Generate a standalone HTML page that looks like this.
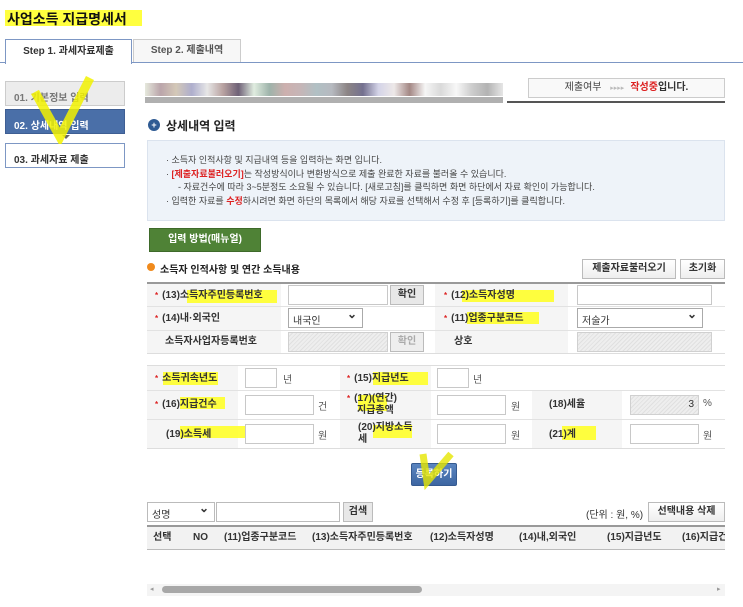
<!DOCTYPE html>
<html><head><meta charset="utf-8"><style>
*{box-sizing:border-box;margin:0;padding:0}
body{width:743px;height:607px;background:#fff;font-family:"Liberation Sans","Noto Sans CJK KR",sans-serif;font-size:10px;color:#333;position:relative;overflow:hidden}
.a{position:absolute}
.hl{position:absolute;background:#ffff2a;opacity:.9}
.inp{position:absolute;border:1px solid #c8c8c8;background:#fff;height:20px}
.dis{background:repeating-linear-gradient(135deg,#eee 0 2px,#e0e0e0 2px 3px);border-color:#d0d0d0}
.btn{position:absolute;border:1px solid #bbb;background:linear-gradient(#fff,#eee);font-weight:bold;font-size:10px;text-align:center;color:#333}
.lbl{position:absolute;font-weight:bold;font-size:10px;color:#333;line-height:12px;white-space:nowrap}
.st{color:#d22;font-size:8px;margin-right:4px}
.sel{position:absolute;border:1px solid #aaa;background:#fff;height:20px;font-size:10px;padding:3px 4px}
.sel:after{content:"⌄";position:absolute;right:5px;top:-2px;font-weight:bold;font-size:12px}
.u{position:absolute;font-size:10px;color:#555}
</style></head><body>
<div class="hl" style="left:5px;top:10px;width:137px;height:16px"></div>
<div class="a" style="left:7px;top:9px;font-size:14px;font-weight:bold;color:#111">사업소득 지급명세서</div>

<div class="a" style="left:0;top:62px;width:743px;height:1px;background:#7d97c4"></div>
<div class="a" style="left:5px;top:39px;width:127px;height:25px;border:1px solid #7d97c4;border-bottom:none;background:#fff;font-weight:bold;font-size:10px;text-align:center;line-height:23px;color:#333">Step 1. 과세자료제출</div>
<div class="a" style="left:133px;top:39px;width:108px;height:23px;border:1px solid #ccc;border-bottom:none;background:#f7f7f7;font-weight:bold;font-size:10px;text-align:center;line-height:22px;color:#555">Step 2. 제출내역</div>

<div class="a" style="left:5px;top:81px;width:120px;height:25px;background:#ececec;border:1px solid #ccc;font-weight:bold;color:#777;padding:7px 8px">01. 기본정보 입력</div>
<div class="a" style="left:5px;top:109px;width:120px;height:25px;background:#4a6fa8;border:1px solid #3e5e93;font-weight:bold;color:#fff;padding:7px 8px">02. 상세내역 입력</div>
<div class="a" style="left:62px;top:135px;width:0;height:0;border-left:4px solid transparent;border-right:4px solid transparent;border-top:4px solid #666"></div>
<div class="a" style="left:5px;top:143px;width:120px;height:25px;background:#fff;border:1px solid #7d97c4;font-weight:bold;color:#333;padding:7px 8px">03. 과세자료 제출</div>
<svg class="a" style="left:30px;top:72px" width="66" height="72"><path d="M5 20 L30 65 L60 6" stroke="#f2f200" stroke-width="9" fill="none" opacity=".85"/></svg>

<div class="a" style="left:145px;top:83px;width:358px;height:13px;background:linear-gradient(90deg,#dfe3d4,#a98e95,#c9bba6,#9a9ac0,#e0e0e0,#a88c8a,#4b3a55,#d8e8d8,#86a095,#c09c9a,#b7a3a5,#9db0b5,#a4a8b0,#6f6666,#514d73,#c9c9e2,#e9e3e3,#8d6a66,#f3f3f3,#d0d0d0,#f6f6f6,#c0c0c0,#a0a0a0,#e0e0e0);opacity:.8"></div>
<div class="a" style="left:145px;top:97px;width:358px;height:6px;background:#b0b0b0"></div>

<div class="a" style="left:507px;top:101px;width:218px;height:2px;background:#555"></div>
<div class="a" style="left:528px;top:78px;width:197px;height:20px;border:1px solid #ccc;background:#f9f9f9;text-align:center;line-height:18px;font-size:10px"><span style="color:#444">제출여부</span> <span style="color:#bbb;font-size:7px;margin:0 6px">▸▸▸▸</span><b style="color:#d22">작성중</b><b>입니다.</b></div>

<div class="a" style="left:148px;top:119px;width:12px;height:12px;border-radius:50%;background:#2f5b93;color:#fff;font-size:9px;line-height:12px;text-align:center;font-weight:bold">+</div>
<div class="a" style="left:166px;top:117px;font-size:12px;font-weight:bold;color:#222">상세내역 입력</div>

<div class="a" style="left:147px;top:140px;width:578px;height:81px;background:#eef3f9;border:1px solid #dbe3ee;font-size:9px;color:#444;line-height:13.5px;padding:13px 0 0 18px">
<div>· 소득자 인적사항 및 지급내역 등을 입력하는 화면 입니다.</div>
<div>· <b style="color:#d22">[제출자료불러오기]</b>는 작성방식이나 변환방식으로 제출 완료한 자료를 불러올 수 있습니다.</div>
<div style="padding-left:12px">- 자료건수에 따라 3~5분정도 소요될 수 있습니다. [새로고침]를 클릭하면 화면 하단에서 자료 확인이 가능합니다.</div>
<div>· 입력한 자료를 <b style="color:#d22">수정</b>하시려면 화면 하단의 목록에서 해당 자료를 선택해서 수정 후 [등록하기]를 클릭합니다.</div>
</div>

<div class="a" style="left:149px;top:228px;width:112px;height:24px;background:#4f8236;border:1px solid #3e6a2a;color:#fff;font-weight:bold;text-align:center;line-height:22px">입력 방법(매뉴얼)</div>

<div class="a" style="left:147px;top:263px;width:8px;height:8px;border-radius:50%;background:#f08a1c"></div>
<div class="a" style="left:160px;top:261px;font-weight:bold;font-size:10px;color:#222">소득자 인적사항 및 연간 소득내용</div>
<div class="btn" style="left:582px;top:259px;width:94px;height:20px;line-height:18px">제출자료불러오기</div>
<div class="btn" style="left:680px;top:259px;width:45px;height:20px;line-height:18px">초기화</div>

<!-- table 1 -->
<div class="a" style="left:147px;top:282px;width:578px;height:72px;border-top:2px solid #999;border-bottom:1px solid #ddd"></div>
<div class="a" style="left:147px;top:284px;width:134px;height:69px;background:#f5f5f5"></div>
<div class="a" style="left:435px;top:284px;width:133px;height:69px;background:#f5f5f5"></div>
<div class="a" style="left:147px;top:306px;width:578px;height:1px;background:#e2e2e2"></div>
<div class="a" style="left:147px;top:330px;width:578px;height:1px;background:#e2e2e2"></div>
<div class="hl" style="left:187px;top:290px;width:90px;height:13px"></div>
<div class="hl" style="left:462px;top:290px;width:92px;height:12px"></div>
<div class="hl" style="left:467px;top:312px;width:72px;height:12px"></div>
<div class="lbl" style="left:155px;top:290px"><span class="st">*</span>(13)소득자주민등록번호</div>
<div class="inp" style="left:288px;top:285px;width:100px"></div>
<div class="btn" style="left:390px;top:285px;width:34px;height:20px;line-height:18px;background:#e8e8e8">확인</div>
<div class="lbl" style="left:444px;top:290px"><span class="st">*</span>(12)소득자성명</div>
<div class="inp" style="left:577px;top:285px;width:135px"></div>
<div class="lbl" style="left:155px;top:313px"><span class="st">*</span>(14)내·외국인</div>
<div class="sel" style="left:288px;top:308px;width:75px">내국인</div>
<div class="lbl" style="left:444px;top:313px"><span class="st">*</span>(11)업종구분코드</div>
<div class="sel" style="left:577px;top:308px;width:126px">저술가</div>
<div class="lbl" style="left:165px;top:336px">소득자사업자등록번호</div>
<div class="inp dis" style="left:288px;top:332px;width:100px"></div>
<div class="btn" style="left:390px;top:332px;width:34px;height:20px;line-height:18px;color:#aaa;background:#eee">확인</div>
<div class="lbl" style="left:454px;top:336px">상호</div>
<div class="inp dis" style="left:577px;top:332px;width:135px"></div>

<!-- table 2 -->
<div class="a" style="left:147px;top:365px;width:578px;height:84px;border-top:1px solid #ddd;border-bottom:1px solid #ddd"></div>
<div class="a" style="left:147px;top:366px;width:91px;height:82px;background:#f5f5f5"></div>
<div class="a" style="left:340px;top:366px;width:91px;height:82px;background:#f5f5f5"></div>
<div class="a" style="left:532px;top:391px;width:90px;height:57px;background:#f5f5f5"></div>
<div class="a" style="left:147px;top:390px;width:578px;height:1px;background:#e2e2e2"></div>
<div class="a" style="left:147px;top:419px;width:578px;height:1px;background:#e2e2e2"></div>
<div class="hl" style="left:163px;top:372px;width:55px;height:13px"></div>
<div class="hl" style="left:373px;top:372px;width:55px;height:13px"></div>
<div class="hl" style="left:180px;top:397px;width:45px;height:12px"></div>
<div class="hl" style="left:358px;top:395px;width:29px;height:16px"></div>
<div class="hl" style="left:180px;top:426px;width:70px;height:12px"></div>
<div class="hl" style="left:373px;top:425px;width:39px;height:13px"></div>
<div class="hl" style="left:562px;top:426px;width:34px;height:14px"></div>
<div class="lbl" style="left:155px;top:373px"><span class="st">*</span>소득귀속년도</div>
<div class="inp" style="left:245px;top:368px;width:32px"></div><div class="u" style="left:283px;top:371px">년</div>
<div class="lbl" style="left:347px;top:373px"><span class="st">*</span>(15)지급년도</div>
<div class="inp" style="left:437px;top:368px;width:32px"></div><div class="u" style="left:473px;top:371px">년</div>
<div class="lbl" style="left:155px;top:399px"><span class="st">*</span>(16)지급건수</div>
<div class="inp" style="left:245px;top:395px;width:69px"></div><div class="u" style="left:318px;top:398px">건</div>
<div class="lbl" style="left:347px;top:393px"><span class="st">*</span>(17)(연간)<br><span style="padding-left:10px">지급총액</span></div>
<div class="inp" style="left:437px;top:395px;width:69px"></div><div class="u" style="left:511px;top:398px">원</div>
<div class="lbl" style="left:549px;top:399px">(18)세율</div>
<div class="inp dis" style="left:630px;top:395px;width:69px;text-align:right;padding:3px 4px;font-size:10px">3</div><div class="u" style="left:703px;top:398px">%</div>
<div class="lbl" style="left:166px;top:429px">(19)소득세</div>
<div class="inp" style="left:245px;top:424px;width:69px"></div><div class="u" style="left:318px;top:427px">원</div>
<div class="lbl" style="left:358px;top:422px">(20)지방소득<br>세</div>
<div class="inp" style="left:437px;top:424px;width:69px"></div><div class="u" style="left:511px;top:427px">원</div>
<div class="lbl" style="left:549px;top:429px">(21)계</div>
<div class="inp" style="left:630px;top:424px;width:69px"></div><div class="u" style="left:703px;top:427px">원</div>

<div class="a" style="left:411px;top:463px;width:46px;height:23px;background:linear-gradient(#5a85c0,#3d66a2);border:1px solid #355a90;border-radius:2px;color:#fff;font-weight:bold;text-align:center;line-height:21px">등록하기</div>
<svg class="a" style="left:415px;top:448px" width="50" height="44"><path d="M8 6 L12 34 L36 6" stroke="#e6e600" stroke-width="7" fill="none" opacity=".8"/></svg>

<div class="sel" style="left:147px;top:502px;width:68px;border-color:#bbb">성명</div>
<div class="inp" style="left:216px;top:502px;width:124px;border-color:#bbb"></div>
<div class="btn" style="left:343px;top:502px;width:30px;height:20px;line-height:18px;background:#e8e8e8">검색</div>
<div class="u" style="left:586px;top:506px;color:#333">(단위 : 원, %)</div>
<div class="btn" style="left:648px;top:502px;width:77px;height:20px;line-height:18px">선택내용 삭제</div>

<div class="a" style="left:147px;top:525px;width:578px;height:25px;background:#f2f2f2;border-top:2px solid #999;border-bottom:1px solid #bbb;font-weight:bold;font-size:10px;color:#333;line-height:22px;white-space:nowrap;overflow:hidden">
<span class="a" style="left:6px">선택</span><span class="a" style="left:46px">NO</span><span class="a" style="left:77px">(11)업종구분코드</span><span class="a" style="left:165px">(13)소득자주민등록번호</span><span class="a" style="left:283px">(12)소득자성명</span><span class="a" style="left:372px">(14)내,외국인</span><span class="a" style="left:460px">(15)지급년도</span><span class="a" style="left:535px">(16)지급건수</span>
</div>
<div class="a" style="left:147px;top:584px;width:578px;height:12px;background:#f4f4f4"></div>
<div class="a" style="left:162px;top:586px;width:260px;height:7px;border-radius:4px;background:#a8a8a8"></div>
<div class="a" style="left:150px;top:585px;font-size:7px;color:#999">◂</div>
<div class="a" style="left:717px;top:585px;font-size:7px;color:#999">▸</div>
</body></html>
